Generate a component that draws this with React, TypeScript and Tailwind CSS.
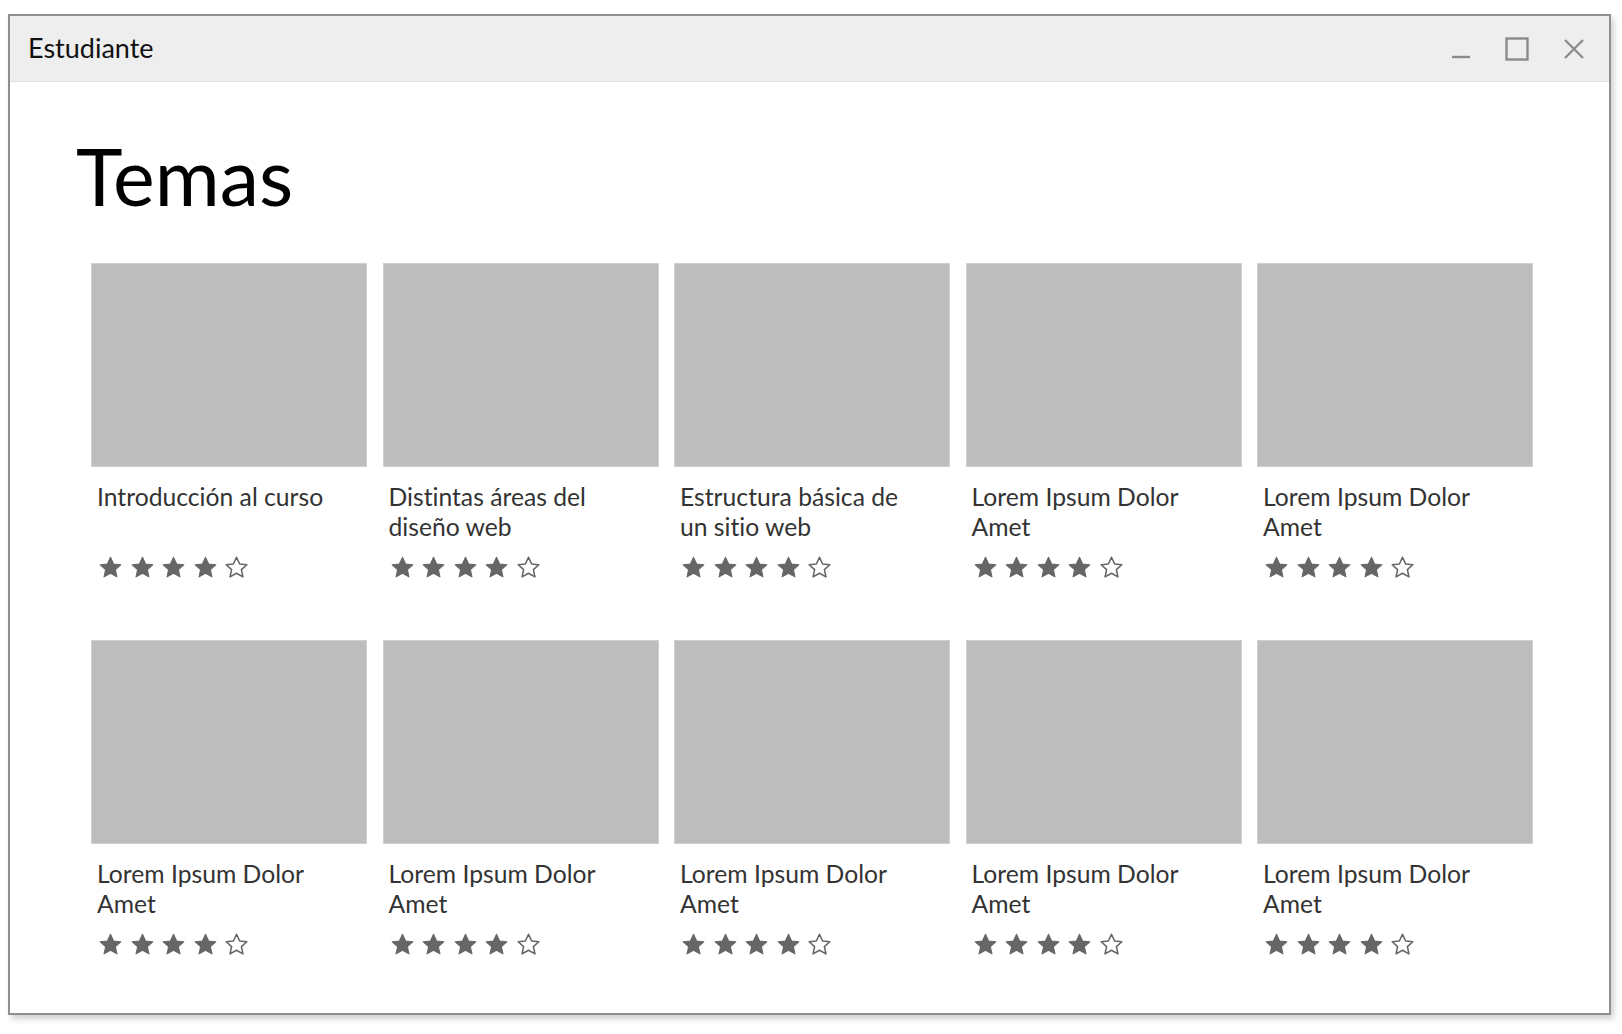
const topics = [
  "Introducción al curso",
  "Distintas áreas del diseño web",
  "Estructura básica de un sitio web",
  "Lorem Ipsum Dolor Amet",
  "Lorem Ipsum Dolor Amet",
  "Lorem Ipsum Dolor Amet",
  "Lorem Ipsum Dolor Amet",
  "Lorem Ipsum Dolor Amet",
  "Lorem Ipsum Dolor Amet",
  "Lorem Ipsum Dolor Amet",
];

const STAR =
  "M12 2.2l3 6.4 6.9.8-5.2 4.7 1.5 6.9L12 17.5l-6.2 3.5 1.5-6.9-5.2-4.7 6.9-.8z";

function Star({ filled }: { filled: boolean }) {
  return (
    <svg width="25" height="25" viewBox="0 0 24 24" className="shrink-0">
      <path
        d={STAR}
        fill={filled ? "#666666" : "none"}
        stroke="#666666"
        strokeWidth={filled ? 1 : 1.5}
        strokeLinejoin="round"
      />
    </svg>
  );
}

function Rating({ value }: { value: number }) {
  return (
    <div className="flex gap-[6.5px] pl-[7px]">
      {[0, 1, 2, 3, 4].map((i) => (
        <Star key={i} filled={i < value} />
      ))}
    </div>
  );
}

function TopicCard({ title }: { title: string }) {
  return (
    <div className="flex flex-col">
      <div className="h-[204px] w-full bg-[#bdbdbd] border border-[#cfcfcf]" />
      <p className="mt-[15px] h-[60px] w-[238px] pl-[6px] text-[24.7px] leading-[30px] text-[#333333] [font-variant-ligatures:none]">
        {title}
      </p>
      <div className="mt-[13px]">
        <Rating value={4} />
      </div>
    </div>
  );
}

function WindowControls() {
  return (
    <div className="flex items-center gap-[34px] pr-[24px]">
      <svg width="20" height="24" viewBox="0 0 20 24">
        <line x1="1" y1="20" x2="19" y2="20" stroke="#8a8a8a" strokeWidth="2.4" />
      </svg>
      <svg width="24" height="24" viewBox="0 0 24 24">
        <rect x="1.5" y="1.5" width="21" height="21" fill="none" stroke="#8a8a8a" strokeWidth="2.4" />
      </svg>
      <svg width="22" height="22" viewBox="0 0 22 22">
        <path d="M2 2l18 18M20 2L2 20" stroke="#8a8a8a" strokeWidth="2.2" />
      </svg>
    </div>
  );
}

export default function App() {
  return (
    <div
      className="w-[1622px] h-[1034px] bg-white pt-[14px] pl-[8px]"
      style={{ fontFamily: "Lato, 'Open Sans', sans-serif" }}
    >
      <div className="w-[1603px] h-[1001px] border-2 border-[#8f8f8f] bg-white shadow-[3px_4px_6px_rgba(0,0,0,0.18)] flex flex-col">
        {/* Title bar */}
        <div className="h-[66px] shrink-0 bg-[#eeeeee] border-b border-[#e2e2e2] flex items-center justify-between pl-[18px]">
          <span className="text-[27px] text-[#111111] [font-variant-ligatures:none]">Estudiante</span>
          <WindowControls />
        </div>

        {/* Content */}
        <div className="flex-1 pt-[56px]">
          <h1 className="pl-[66px] text-[79px] leading-[76px] text-black">Temas</h1>
          <div className="mt-[49px] pl-[81px] grid grid-cols-[repeat(5,276px)] gap-x-[15.5px] gap-y-[60px]">
            {topics.map((t, i) => (
              <TopicCard key={i} title={t} />
            ))}
          </div>
        </div>
      </div>
    </div>
  );
}
